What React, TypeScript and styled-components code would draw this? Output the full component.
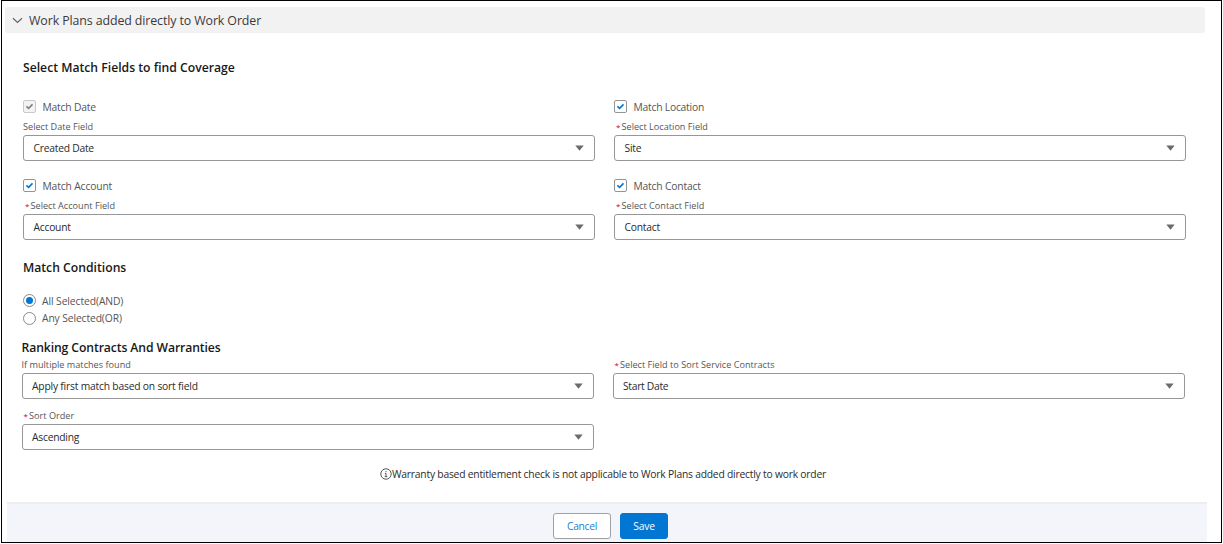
import React from "react";
import styled, { createGlobalStyle } from "styled-components";

const GlobalStyle = createGlobalStyle`
  * { box-sizing: border-box; }
  body { margin: 0; background: #fff; font-family: "Open Sans", "Noto Sans", sans-serif; font-size: 10.3px; color: #2b2b2b; }
`;

const Frame = styled.main`
  width: 1221px;
  height: 543px;
  margin-left: 1px;
  border: 1px solid #000;
  display: flex;
  flex-direction: column;
  overflow: hidden;
`;

const SectionHeader = styled.header`
  display: flex;
  align-items: center;
  gap: 6px;
  width: 1200px;
  height: 26px;
  margin: 6px 0 0 3px;
  padding: 2px 0 0 7px;
  background: #f2f2f2;
  border-radius: 3px;
  font-size: 12.4px;
  color: #3a3a3a;
`;

const Content = styled.div`
  height: 470px;
  padding-left: 21px;
  display: flex;
  flex-direction: column;
`;

const Text = styled.span<{ $track?: number }>`
  white-space: nowrap;
  letter-spacing: ${(p) => p.$track ?? 0}px;
`;

const Heading = styled.h2<{ $top: number; $shift?: number }>`
  margin: ${(p) => p.$top}px 0 0 ${(p) => p.$shift ?? 0}px;
  font-size: 12.2px;
  line-height: 18px;
  font-weight: 600;
  color: #181818;
`;

const Columns = styled.div<{ $top: number; $shift?: number }>`
  display: grid;
  grid-template-columns: 572px 572px;
  column-gap: 19px;
  margin: ${(p) => p.$top}px 0 0 ${(p) => p.$shift ?? 0}px;
`;

const Field = styled.div`
  display: flex;
  flex-direction: column;
`;

const CheckRow = styled.label`
  display: flex;
  align-items: center;
  height: 14px;
  margin-bottom: 6px;
  gap: 6.5px;
  color: #555;
`;

const CheckBox = styled.span<{ $disabled?: boolean }>`
  display: flex;
  align-items: center;
  justify-content: center;
  width: 13px;
  height: 13px;
  border: 1px solid ${(p) => (p.$disabled ? "#c9c9c9" : "#949494")};
  border-radius: 2px;
  background: ${(p) => (p.$disabled ? "#f3f3f3" : "#fff")};
  color: ${(p) => (p.$disabled ? "#808080" : "#0176d3")};
`;

const FieldLabel = styled.div`
  display: flex;
  height: 15px;
  line-height: 13px;
  font-size: 9.1px;
  color: #555;
`;

const Star = styled.span`
  width: 5.5px;
  margin-left: 2px;
  font-size: 8px;
  color: #d0021b;
`;

const SelectBox = styled.div`
  display: flex;
  align-items: center;
  justify-content: space-between;
  height: 26px;
  padding: 0 10px 0 9.5px;
  border: 1px solid #979797;
  border-radius: 3px;
  background: #fff;
`;

const RadioGroup = styled.div`
  display: flex;
  flex-direction: column;
  gap: 4px;
  margin-top: 17px;
`;

const RadioRow = styled.label`
  display: flex;
  align-items: center;
  gap: 6px;
  height: 13.5px;
  color: #555;
`;

const Radio = styled.span<{ $on?: boolean }>`
  display: flex;
  align-items: center;
  justify-content: center;
  width: 13px;
  height: 13px;
  border: 1px solid #8a8a8a;
  border-radius: 50%;
  &::after {
    content: "";
    width: 7px;
    height: 7px;
    border-radius: 50%;
    background: ${(p) => (p.$on ? "#0176d3" : "transparent")};
  }
`;

const Notice = styled.p`
  display: flex;
  align-items: center;
  height: 16px;
  margin: 16px 0 0 357px;
`;

const Footer = styled.footer`
  display: flex;
  gap: 9px;
  width: 1200px;
  height: 40px;
  margin-left: 5px;
  padding: 9px 0 0 546px;
  border-top: 2px solid #eeeeed;
  background: #f4f5fa;
`;

const Button = styled.button<{ $primary?: boolean }>`
  display: flex;
  align-items: center;
  justify-content: center;
  width: ${(p) => (p.$primary ? 48 : 58)}px;
  height: 26px;
  padding: 0;
  border: 1px solid ${(p) => (p.$primary ? "#0176d3" : "#a0a0a0")};
  border-radius: 3px;
  background: ${(p) => (p.$primary ? "#0176d3" : "#fff")};
  color: ${(p) => (p.$primary ? "#fff" : "#2080d2")};
  font: inherit;
`;

const Chevron = () => (
  <svg width="11" height="7" viewBox="0 0 11 7" fill="none" stroke="#666" strokeWidth="1.2">
    <path d="M1 1.2 5.5 5.4 10 1.2" />
  </svg>
);

const Tick = () => (
  <svg width="9" height="7" viewBox="0 0 9 7" fill="none" stroke="currentColor" strokeWidth="1.6">
    <path d="M1.4 3.4 3.6 5.3 7.5 1.4" />
  </svg>
);

const Caret = () => (
  <svg width="9" height="6" viewBox="0 0 9 6" fill="#6b6b6b">
    <path d="M.3.5h8.4L4.5 5.8z" />
  </svg>
);

const InfoIcon = () => (
  <svg width="12" height="12" viewBox="0 0 12 12" fill="none" stroke="#555" strokeWidth="1">
    <circle cx="6" cy="6" r="5.2" />
    <path d="M6 3v1.2M4.9 5.4H6v3.2M4.7 8.6h2.6" />
  </svg>
);

type FieldProps = {
  label: string;
  value: string;
  required?: boolean;
  labelTrack?: number;
  valueTrack?: number;
  check?: string;
  checkTrack?: number;
  disabled?: boolean;
};

const SelectField = ({ labelTrack = 0.02, valueTrack = -0.24, checkTrack = -0.18, ...p }: FieldProps) => (
  <Field>
    {p.check && (
      <CheckRow>
        <CheckBox $disabled={p.disabled}>
          <Tick />
        </CheckBox>
        <Text $track={checkTrack}>{p.check}</Text>
      </CheckRow>
    )}
    <FieldLabel>
      {p.required && <Star>*</Star>}
      <Text $track={labelTrack}>{p.label}</Text>
    </FieldLabel>
    <SelectBox>
      <Text $track={valueTrack}>{p.value}</Text>
      <Caret />
    </SelectBox>
  </Field>
);

export default function App() {
  return (
    <>
      <GlobalStyle />
      <Frame>
        <SectionHeader>
          <Chevron />
          <Text $track={-0.11}>Work Plans added directly to Work Order</Text>
        </SectionHeader>
        <Content>
          <Heading $top={26}>
            <Text>Select Match Fields to find Coverage</Text>
          </Heading>
          <Columns $top={23}>
            <SelectField check="Match Date" disabled label="Select Date Field" value="Created Date" />
            <SelectField check="Match Location" checkTrack={-0.22} required label="Select Location Field" value="Site" />
          </Columns>
          <Columns $top={18}>
            <SelectField check="Match Account" checkTrack={-0.14} required label="Select Account Field" value="Account" />
            <SelectField check="Match Contact" required label="Select Contact Field" value="Contact" />
          </Columns>
          <Heading $top={19}>
            <Text>Match Conditions</Text>
          </Heading>
          <RadioGroup>
            <RadioRow>
              <Radio $on />
              <Text $track={-0.08}>All Selected(AND)</Text>
            </RadioRow>
            <RadioRow>
              <Radio />
              <Text $track={-0.11}>Any Selected(OR)</Text>
            </RadioRow>
          </RadioGroup>
          <Heading $top={14} $shift={-1.5}>
            <Text $track={-0.1}>Ranking Contracts And Warranties</Text>
          </Heading>
          <Columns $top={1} $shift={-1.5}>
            <SelectField label="If multiple matches found" value="Apply first match based on sort field" valueTrack={-0.2} />
            <SelectField required label="Select Field to Sort Service Contracts" value="Start Date" valueTrack={-0.29} />
          </Columns>
          <Columns $top={10} $shift={-1.5}>
            <SelectField required label="Sort Order" value="Ascending" />
          </Columns>
          <Notice>
            <InfoIcon />
            <Text $track={-0.21}>Warranty based entitlement check is not applicable to Work Plans added directly to work order</Text>
          </Notice>
        </Content>
        <Footer>
          <Button>
            <Text $track={-0.3}>Cancel</Text>
          </Button>
          <Button $primary>
            <Text $track={-0.15}>Save</Text>
          </Button>
        </Footer>
      </Frame>
    </>
  );
}
